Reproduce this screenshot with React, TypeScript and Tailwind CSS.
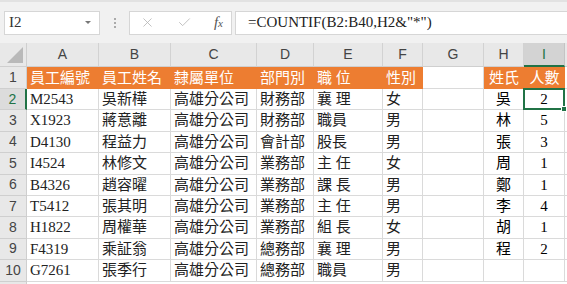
import { X, Check } from "lucide-react";

const cols = ["A", "B", "C", "D", "E", "F", "G", "H", "I"];

const header = ["員工編號", "員工姓名", "隸屬單位", "部門別", "職 位", "性別"];

const rows = [
  ["M2543", "吳新樺", "高雄分公司", "財務部", "襄 理", "女", "吳", "2"],
  ["X1923", "蔣意離", "高雄分公司", "財務部", "職員", "男", "林", "5"],
  ["D4130", "程益力", "高雄分公司", "會計部", "股長", "男", "張", "3"],
  ["I4524", "林修文", "高雄分公司", "業務部", "主 任", "女", "周", "1"],
  ["B4326", "趙容曜", "高雄分公司", "業務部", "課 長", "男", "鄭", "1"],
  ["T5412", "張其明", "高雄分公司", "業務部", "主 任", "男", "李", "4"],
  ["H1822", "周權華", "高雄分公司", "業務部", "組 長", "女", "胡", "1"],
  ["F4319", "乘証翁", "高雄分公司", "總務部", "襄 理", "男", "程", "2"],
  ["G7261", "張季行", "高雄分公司", "總務部", "職員", "男", "", ""],
];

const font = "font-['Liberation_Serif','Noto_Sans_CJK_TC',serif]";
const cell = "border-r border-b border-[#dadada] flex items-center overflow-hidden whitespace-nowrap";

export default function App() {
  return (
    <div className="w-[567px] h-[284px] overflow-hidden bg-white">
      {/* Formula bar */}
      <div className="h-[43px] bg-[#f1f1f1] border-t-2 border-[#e2e2e2] flex items-center gap-0 pl-1">
        <div className="w-[96px] h-6 bg-white border border-[#d6d6d6] flex items-center justify-between pl-1 pr-2">
          <span className={`${font} text-[15px] text-[#333]`}>I2</span>
          <svg width="6" height="4" viewBox="0 0 6 4">
            <path d="M0 0h6L3 3z" fill="#777" />
          </svg>
        </div>
        <div className="w-[29px] flex flex-col items-center gap-[2px]">
          <span className="w-[2px] h-[2px] bg-[#aaa]" />
          <span className="w-[2px] h-[2px] bg-[#aaa]" />
          <span className="w-[2px] h-[2px] bg-[#aaa]" />
        </div>
        <div className="w-[103px] h-6 bg-white border border-[#d6d6d6] flex items-center justify-between pl-[10px] pr-[8px]">
          <X size={15} strokeWidth={1.3} color="#b4b4b4" />
          <Check size={15} strokeWidth={1.3} color="#b4b4b4" />
          <span className="font-['Liberation_Serif',serif] italic text-[#555] text-[15px] leading-none">
            f<span className="text-[11px]">x</span>
          </span>
        </div>
        <div className="ml-[3px] flex-1 h-6 bg-white border border-[#d6d6d6] border-r-0 flex items-center pl-3">
          <span className={`${font} text-[15px] text-[#222]`}>=COUNTIF(B2:B40,H2&amp;"*")</span>
        </div>
      </div>

      {/* Grid */}
      <div className="grid grid-cols-[27px_72px_72px_86px_57px_69px_40px_61px_40px_41px_1fr] grid-rows-[24px_22px_repeat(10,21.4px)]">
        {/* column headers */}
        <div className="bg-[#e8e8e8] border-r border-b border-[#cfcfcf] relative">
          <svg className="absolute right-[3px] bottom-[3px]" width="16" height="16" viewBox="0 0 16 16">
            <path d="M16 0V16H0z" fill="#b9b9b9" />
          </svg>
        </div>
        {cols.map((c) => (
          <div
            key={c}
            className={`flex items-center justify-center text-[14px] font-['Liberation_Sans',sans-serif] border-r ${
              c === "I"
                ? "bg-[#d3d3d3] border-[#c4c4c4] border-b-2 border-b-[#217346] text-[#217346]"
                : "bg-[#e8e8e8] border-[#d2d2d2] border-b border-b-[#cfcfcf] text-[#444]"
            }`}
          >
            {c}
          </div>
        ))}
        <div className="bg-[#e8e8e8] border-b border-[#cfcfcf]" />

        {/* row 1 */}
        <div className="bg-[#e8e8e8] border-r border-b border-[#cfcfcf] flex items-center justify-center text-[14px] text-[#444] font-['Liberation_Sans',sans-serif]">
          1
        </div>
        {header.map((h) => (
          <div key={h} className={`bg-[#ed7d31] flex items-center pl-[3px] text-white text-[15px] ${font} whitespace-pre`}>
            {h}
          </div>
        ))}
        <div className={cell} />
        <div className={`bg-[#ed7d31] flex items-center justify-center text-white text-[15px] ${font}`}>姓氏</div>
        <div className={`bg-[#ed7d31] flex items-center justify-center text-white text-[15px] ${font}`}>人數</div>
        <div className="border-b border-[#dadada]" />

        {rows.map((r, i) => {
          const n = i + 2;
          const active = n === 2;
          return [
            <div
              key={`h${n}`}
              className={`border-b border-[#cfcfcf] flex items-center justify-center text-[14px] font-['Liberation_Sans',sans-serif] ${
                active ? "bg-[#dcdcdc] text-[#217346] border-r-2 border-r-[#217346]" : "bg-[#e8e8e8] text-[#444] border-r border-r-[#cfcfcf]"
              }`}
            >
              {n}
            </div>,
            ...r.slice(0, 6).map((v, j) => (
              <div key={`${n}-${j}`} className={`${cell} pl-[3px] text-[15px] text-[#222] ${font} whitespace-pre`}>
                {v}
              </div>
            )),
            <div key={`${n}-g`} className={cell} />,
            <div key={`${n}-h`} className={`${cell} justify-center text-[15px] text-black ${font}`}>
              {r[6]}
            </div>,
            active ? (
              <div
                key={`${n}-i`}
                className={`relative flex items-center justify-center border-2 border-[#217346] -ml-px -mt-px text-[15px] text-black ${font}`}
              >
                {r[7]}
                <span className="absolute -right-[4px] -bottom-[4px] w-[6px] h-[6px] bg-[#217346] border border-white" />
              </div>
            ) : (
              <div key={`${n}-i`} className={`${cell} justify-center text-[15px] text-black ${font}`}>
                {r[7]}
              </div>
            ),
            <div key={`${n}-r`} className="border-b border-[#dadada]" />,
          ];
        })}
        <div className="bg-[#e8e8e8] border-r border-[#cfcfcf]" />
      </div>
    </div>
  );
}
